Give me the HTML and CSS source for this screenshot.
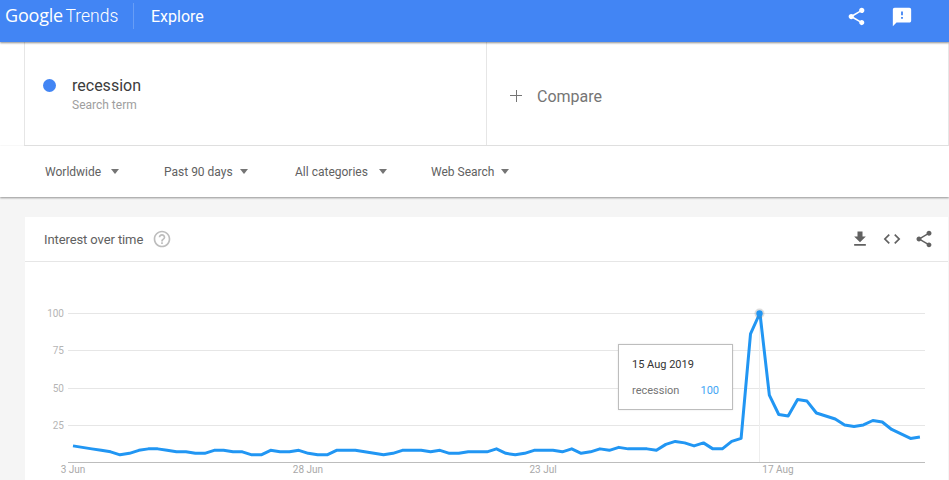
FILE: index.html
```html
<!DOCTYPE html>
<html lang="en">
<head>
    <meta charset="UTF-8">
    <meta name="viewport" content="width=device-width, initial-scale=1.0">
    <title>Google Trends - Explore</title>
    <link rel="stylesheet" href="styles.css">
</head>
<body>
    <!-- Top bar -->
    <header class="topbar">
        <div class="logo"><span class="logo-google">Google</span> <span class="logo-trends">Trends</span></div>
        <div class="page-title">Explore</div>
        <div class="topbar-actions">
            <svg class="icon-share-top" viewBox="0 0 24 24"><path d="M18 16.08c-.76 0-1.44.3-1.96.77L8.91 12.7c.05-.23.09-.46.09-.7s-.04-.47-.09-.7l7.05-4.11c.54.5 1.25.81 2.04.81 1.66 0 3-1.34 3-3s-1.34-3-3-3-3 1.34-3 3c0 .24.04.47.09.7L8.04 9.81C7.5 9.31 6.79 9 6 9c-1.66 0-3 1.34-3 3s1.34 3 3 3c.79 0 1.5-.31 2.04-.81l7.12 4.16c-.05.21-.08.43-.08.65 0 1.61 1.31 2.92 2.92 2.92 1.61 0 2.92-1.31 2.92-2.92s-1.31-2.92-2.92-2.92z"/></svg>
            <svg class="icon-feedback" viewBox="0 0 24 24"><path d="M20 2H4c-1.1 0-1.99.9-1.99 2L2 22l4-4h14c1.1 0 2-.9 2-2V4c0-1.1-.9-2-2-2zm-7 12h-2v-2h2v2zm0-4h-2V6h2v4z"/></svg>
        </div>
    </header>

    <!-- Search terms -->
    <section class="terms">
        <div class="term">
            <span class="term-dot"></span>
            <div class="term-text">
                <div class="term-name">recession</div>
                <div class="term-type">Search term</div>
            </div>
        </div>
        <div class="compare">
            <span class="compare-plus"></span>
            <span class="compare-label">Compare</span>
        </div>
    </section>

    <!-- Filters -->
    <nav class="filters">
        <div class="filter filter-a">Worldwide <span class="caret"></span></div>
        <div class="filter filter-b">Past 90 days <span class="caret"></span></div>
        <div class="filter filter-c">All categories <span class="caret"></span></div>
        <div class="filter filter-d">Web Search <span class="caret"></span></div>
    </nav>

    <main class="content">
        <div class="card">
            <div class="card-header">
                <h2>Interest over time</h2>
                <svg class="icon-help" viewBox="0 0 24 24"><path d="M11 18h2v-2h-2v2zm1-16C6.48 2 2 6.48 2 12s4.48 10 10 10 10-4.48 10-10S17.52 2 12 2zm0 18c-4.41 0-8-3.59-8-8s3.59-8 8-8 8 3.59 8 8-3.59 8-8 8zm0-14c-2.21 0-4 1.79-4 4h2c0-1.1.9-2 2-2s2 .9 2 2c0 2-3 1.75-3 5h2c0-2.25 3-2.5 3-5 0-2.21-1.79-4-4-4z"/></svg>
                <div class="card-actions">
                    <svg viewBox="0 0 24 24"><path d="M19 9h-4V3H9v6H5l7 7 7-7zM5 18v2h14v-2H5z"/></svg>
                    <svg viewBox="0 0 24 24"><path d="M9.4 16.6L4.8 12l4.6-4.6L8 6l-6 6 6 6 1.4-1.4zm5.2 0l4.6-4.6-4.6-4.6L16 6l6 6-6 6-1.4-1.4z"/></svg>
                    <svg viewBox="0 0 24 24"><path d="M18 16.08c-.76 0-1.44.3-1.96.77L8.91 12.7c.05-.23.09-.46.09-.7s-.04-.47-.09-.7l7.05-4.11c.54.5 1.25.81 2.04.81 1.66 0 3-1.34 3-3s-1.34-3-3-3-3 1.34-3 3c0 .24.04.47.09.7L8.04 9.81C7.5 9.31 6.79 9 6 9c-1.66 0-3 1.34-3 3s1.34 3 3 3c.79 0 1.5-.31 2.04-.81l7.12 4.16c-.05.21-.08.43-.08.65 0 1.61 1.31 2.92 2.92 2.92 1.61 0 2.92-1.31 2.92-2.92s-1.31-2.92-2.92-2.92z"/></svg>
                </div>
            </div>
            <div class="chart">
                <!-- viewBox uses page coordinates -->
                <svg class="chart-svg" viewBox="25 262 923 218">
                    <line class="grid" x1="68" y1="313.5" x2="925" y2="313.5"/>
                    <line class="grid" x1="68" y1="350.5" x2="925" y2="350.5"/>
                    <line class="grid" x1="68" y1="388.5" x2="925" y2="388.5"/>
                    <line class="grid" x1="68" y1="425.5" x2="925" y2="425.5"/>
                    <line class="crosshair" x1="759.5" y1="313" x2="759.5" y2="462"/>
                    <line class="axis" x1="68" y1="462.5" x2="925" y2="462.5"/>
                    <text class="y-label" x="64" y="317">100</text>
                    <text class="y-label" x="64" y="354">75</text>
                    <text class="y-label" x="64" y="392">50</text>
                    <text class="y-label" x="64" y="429">25</text>
                    <text class="x-label" x="73" y="473">3 Jun</text>
                    <text class="x-label" x="308" y="473">28 Jun</text>
                    <text class="x-label" x="543" y="473">23 Jul</text>
                    <text class="x-label" x="778" y="473">17 Aug</text>
                    <!-- points are day index, interest value -->
                    <g transform="translate(73 462.3) scale(9.41 -1.493)">
                        <polyline class="series" points="0,11 1,10 2,9 3,8 4,7 5,5 6,6 7,8 8,9 9,9 10,8 11,7 12,7 13,6 14,6 15,8 16,8 17,7 18,7 19,5 20,5 21,8 22,7 23,7 24,8 25,6 26,5 27,5 28,8 29,8 30,8 31,7 32,6 33,5 34,6 35,8 36,8 37,8 38,7 39,8 40,6 41,6 42,7 43,7 44,7 45,9 46,6 47,5 48,6 49,8 50,8 51,8 52,7 53,9 54,6 55,7 56,9 57,8 58,10 59,9 60,9 61,9 62,8 63,12 64,14 65,13 66,11 67,13 68,9 69,9 70,14 71,16 72,86 73,100 74,45 75,32 76,31 77,42 78,41 79,33 80,31 81,29 82,25 83,24 84,25 85,28 86,27 87,22 88,19 89,16 90,17"/>
                    </g>
                    <circle class="peak-halo" cx="759.5" cy="313.5" r="5"/>
                    <circle class="peak" cx="759.5" cy="313.5" r="3.2"/>
                </svg>
                <div class="tooltip">
                    <div class="tooltip-date">15 Aug 2019</div>
                    <div class="tooltip-row">
                        <span class="tooltip-term">recession</span>
                        <span class="tooltip-value">100</span>
                    </div>
                </div>
            </div>
        </div>
    </main>
</body>
</html>
```

FILE: styles.css
```css
html, body {
    height: 480px;
    overflow: hidden;
}
body {
    margin: 0;
    background-color: #ffffff;
    font-family: Roboto, "Liberation Sans", sans-serif;
}

/* Top bar */
.topbar {
    position: relative;
    z-index: 2;
    height: 42px;
    padding-bottom: 10px;
    box-sizing: border-box;
    display: flex;
    align-items: center;
    background-color: #4285f4;
    color: #ffffff;
    box-shadow: 0 1px 2px rgba(0, 0, 0, 0.45);
}
.logo {
    width: 128px;
    height: 26px;
    padding-left: 5px;
    box-sizing: content-box;
    border-right: 1px solid rgba(255, 255, 255, 0.2);
    font-size: 18px;
    line-height: 24px;
    white-space: nowrap;
}
.logo-google {
    font-family: "Open Sans", sans-serif;
    letter-spacing: -0.2px;
}
.logo-trends {
    font-size: 17.5px;
    font-weight: 300;
    margin-left: -2px;
}
.page-title {
    margin-left: 17px;
    font-size: 16px;
}
.topbar-actions {
    margin-left: auto;
    margin-right: 36px;
    display: flex;
    align-items: center;
    gap: 24px;
}
.topbar-actions svg {
    fill: #ffffff;
    display: block;
}
.icon-share-top {
    width: 21px;
    height: 21px;
}
.icon-feedback {
    width: 22px;
    height: 22px;
    margin-top: 2px;
}

/* Search terms */
.terms {
    height: 104px;
    margin-left: 24px;
    display: flex;
    border-left: 1px solid #e6e6e6;
    border-right: 1px solid #e6e6e6;
    border-bottom: 1px solid #e6e6e6;
    box-sizing: border-box;
}
.term {
    width: 462px;
    padding-left: 18px;
    box-sizing: border-box;
    display: flex;
    align-items: center;
    gap: 16px;
    border-right: 1px solid #e6e6e6;
}
.term-dot {
    width: 13px;
    height: 13px;
    margin-top: -16px;
    border-radius: 50%;
    background-color: #4285f4;
}
.term-text {
    padding-top: 1px;
}
.term-name {
    font-size: 16px;
    line-height: 20px;
    color: #3c3c3c;
}
.term-type {
    margin-top: 1px;
    font-size: 12px;
    line-height: 16px;
    color: #9e9e9e;
}
.compare {
    flex: 1;
    padding-left: 23px;
    padding-top: 6px;
    display: flex;
    align-items: center;
    gap: 15px;
}
.compare-plus {
    width: 12px;
    height: 12px;
    margin-top: -2px;
    background:
        linear-gradient(#757575, #757575) center / 100% 1px no-repeat,
        linear-gradient(#757575, #757575) center / 1px 100% no-repeat;
}
.compare-label {
    font-size: 16px;
    color: #757575;
}

/* Filters */
.filters {
    position: relative;
    z-index: 1;
    height: 51px;
    padding-left: 45px;
    box-sizing: border-box;
    display: flex;
    align-items: center;
    background-color: #ffffff;
    box-shadow: 0 1px 2px rgba(0, 0, 0, 0.4);
}
.filter {
    display: flex;
    align-items: center;
    font-size: 12px;
    color: #616161;
    white-space: pre;
}
.caret {
    width: 0;
    height: 0;
    border-left: 4.5px solid transparent;
    border-right: 4.5px solid transparent;
    border-top: 5px solid #757575;
}
.filter-a { width: 119px; }
.filter-b { width: 131px; }
.filter-c { width: 136px; }
.filter-a .caret { margin-left: 7px; }
.filter-c .caret { margin-left: 8px; }
.filter-b .caret, .filter-d .caret { margin-left: 4px; }

/* Card */
.content {
    height: 283px;
    padding: 20px 1px 0 25px;
    box-sizing: border-box;
    background-color: #f5f5f5;
}
.card {
    height: 263px;
    background-color: #ffffff;
}
.card-header {
    height: 45px;
    padding-left: 19px;
    padding-right: 14px;
    box-sizing: border-box;
    display: flex;
    align-items: center;
    border-bottom: 1px solid #e6e6e6;
}
.card-header h2 {
    margin: 0;
    font-size: 13px;
    font-weight: 400;
    letter-spacing: -0.1px;
    color: #616161;
}
.icon-help {
    width: 20px;
    height: 20px;
    margin-left: 9px;
    fill: #bdbdbd;
}
.card-actions {
    margin-left: auto;
    display: flex;
    align-items: center;
    gap: 12px;
}
.card-actions svg {
    width: 20px;
    height: 20px;
    fill: #616161;
    display: block;
}

/* Chart */
.chart {
    position: relative;
    height: 218px;
}
.chart-svg {
    display: block;
    width: 923px;
    height: 218px;
}
.grid {
    stroke: #e6e6e6;
    stroke-width: 1;
}
.axis {
    stroke: #bdbdbd;
    stroke-width: 1;
}
.crosshair {
    stroke: #eeeeee;
    stroke-width: 1;
}
.y-label {
    font-size: 10px;
    fill: #b5b5b5;
    text-anchor: end;
}
.x-label {
    font-size: 10px;
    fill: #a8a8a8;
    text-anchor: middle;
}
.series {
    fill: none;
    stroke: #2196f3;
    stroke-width: 3px;
    stroke-linejoin: round;
    vector-effect: non-scaling-stroke;
}
.peak {
    fill: #2196f3;
}
.peak-halo {
    fill: rgba(120, 120, 120, 0.25);
}

/* Tooltip */
.tooltip {
    position: absolute;
    left: 593px;
    top: 82px;
    width: 115px;
    height: 66px;
    padding: 13px 13px 0 13px;
    box-sizing: border-box;
    background-color: #ffffff;
    border: 1px solid #bdbdbd;
    box-shadow: 0 0 2px rgba(0, 0, 0, 0.1);
}
.tooltip-date {
    font-size: 11px;
    line-height: 14px;
    color: #333333;
}
.tooltip-row {
    margin-top: 12px;
    display: flex;
    justify-content: space-between;
    align-items: baseline;
}
.tooltip-term {
    font-size: 11px;
    color: #757575;
}
.tooltip-value {
    font-size: 11px;
    color: #42a5f5;
}
```
